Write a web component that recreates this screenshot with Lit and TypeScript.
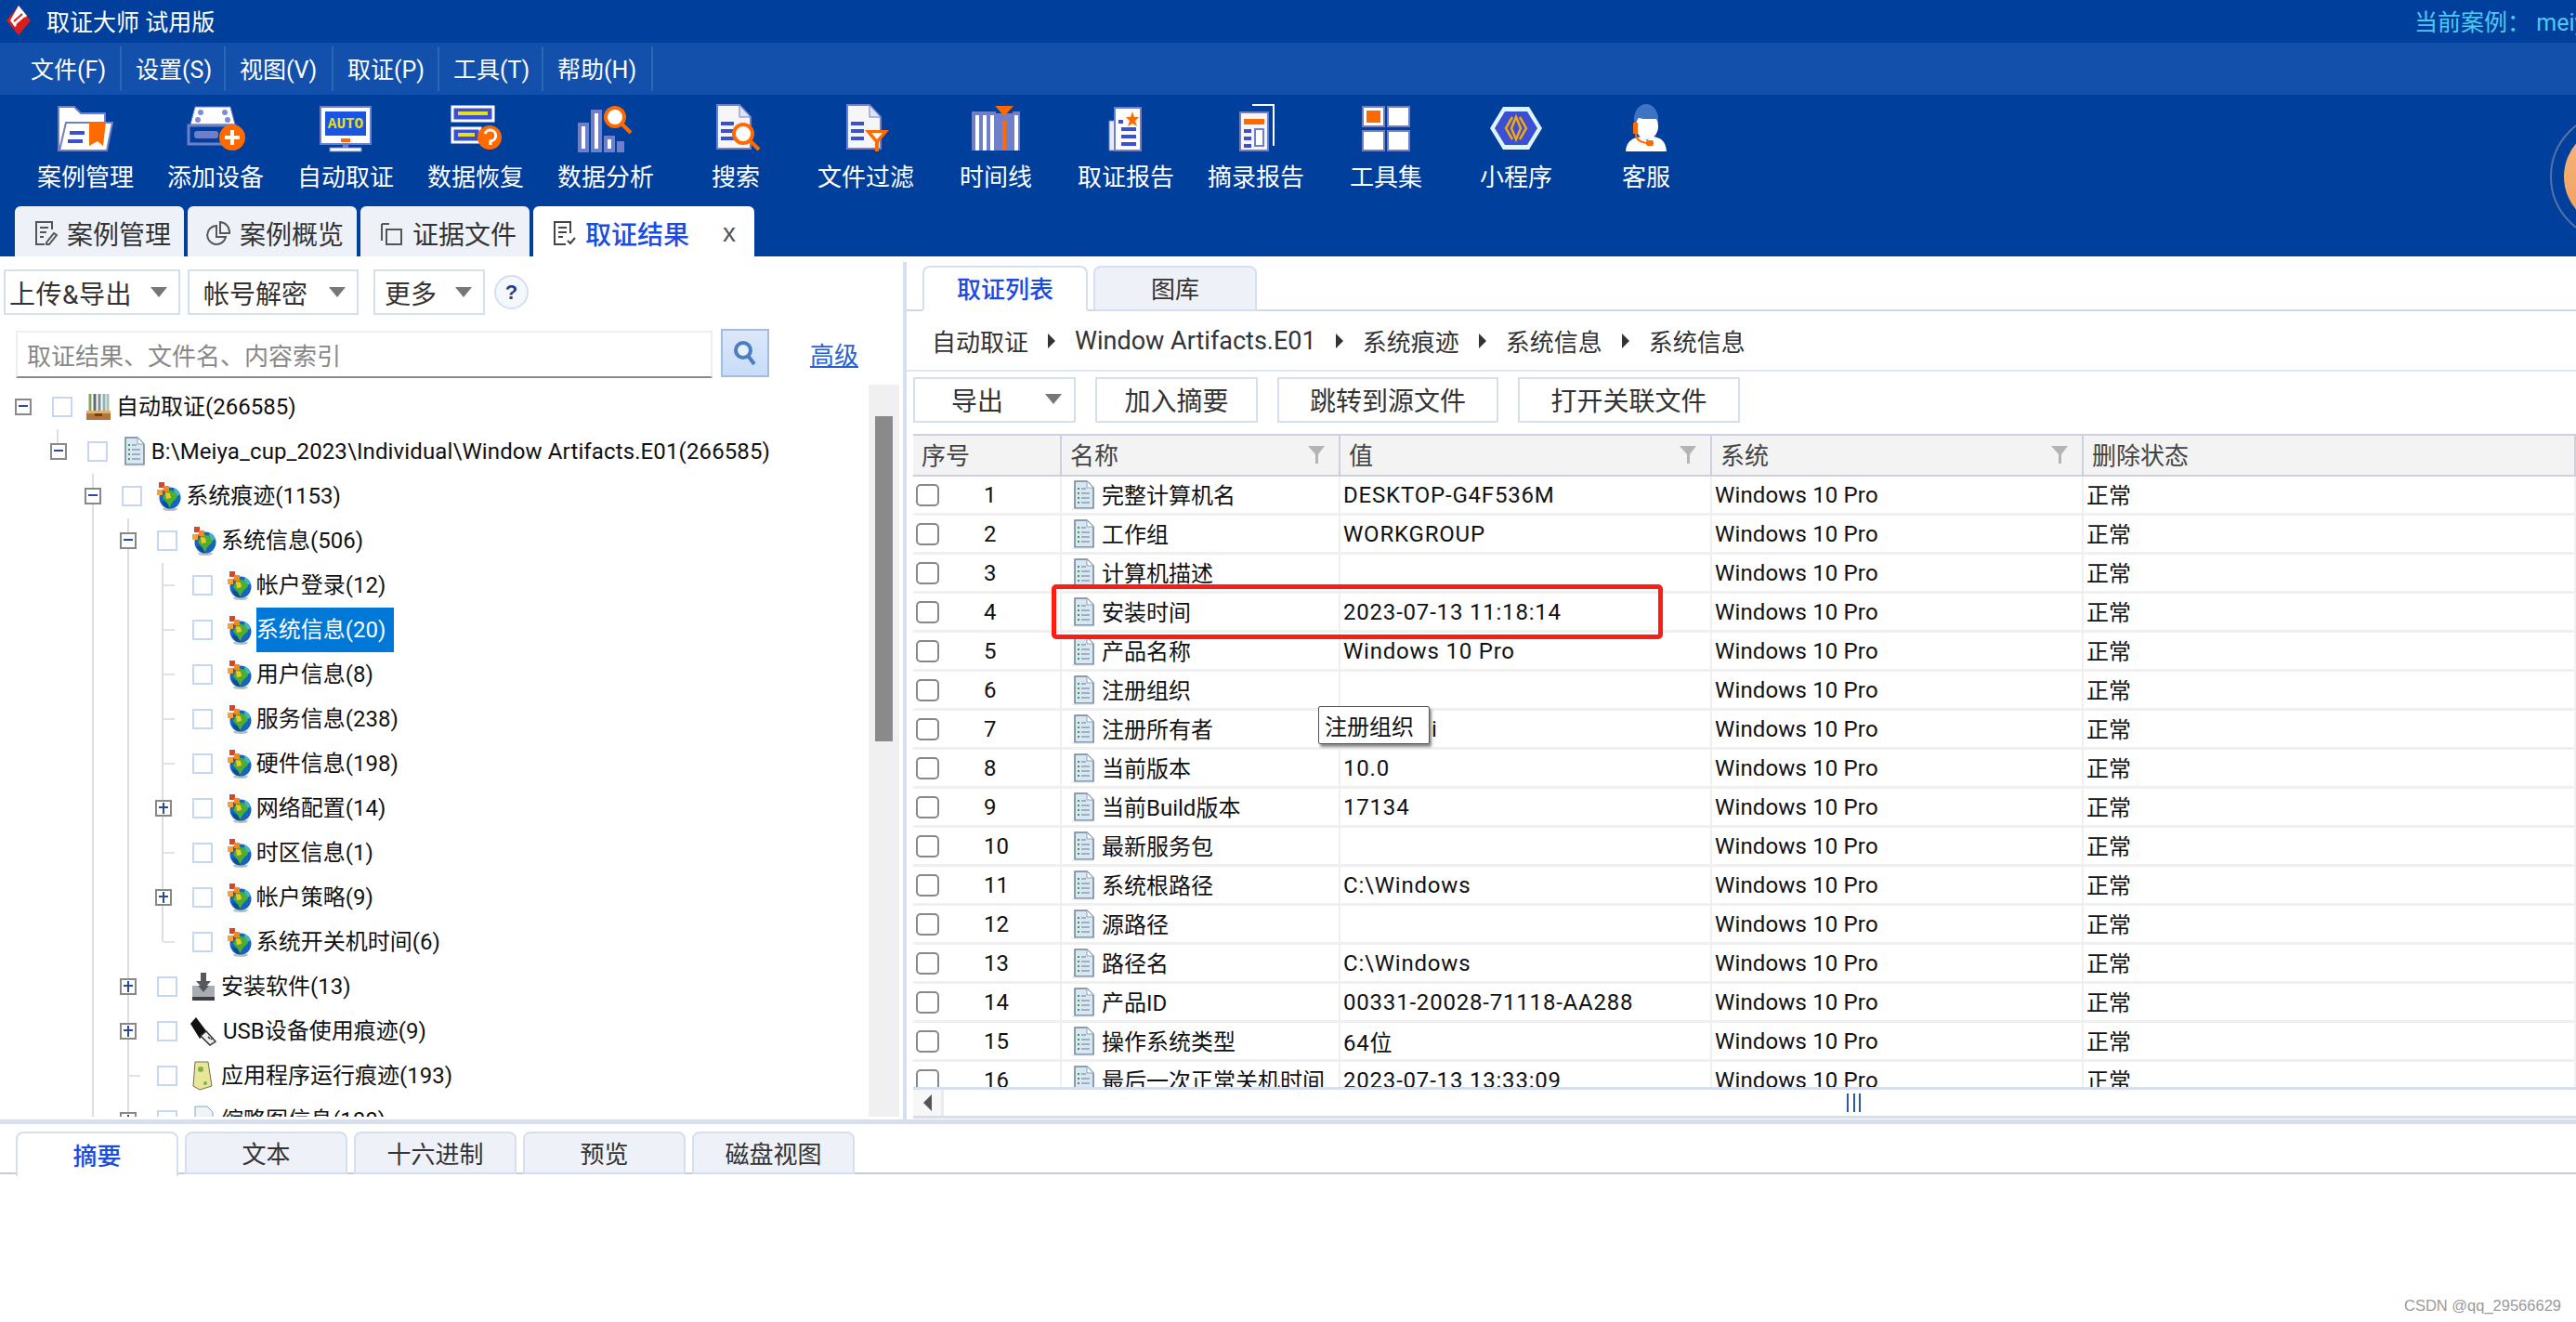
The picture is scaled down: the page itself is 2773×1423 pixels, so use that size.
import { LitElement, html, svg, css } from "lit";
import { customElement } from "lit/decorators.js";
import { classMap } from "lit/directives/class-map.js";

const O = "#6f7fc9";
const B = "#3a4fd2";
const R = "#ff6a00";

const icon = (shapes: unknown) => html`<svg width="64" height="52" viewBox="0 0 64 52">${shapes}</svg>`;

const lens = (x: number, y: number, r: number) => svg`
  <line x1=${x + r * 0.7} y1=${y + r * 0.7} x2=${x + r + 7} y2=${y + r + 7} stroke=${R} stroke-width="4"/>
  <circle cx=${x} cy=${y} r=${r} fill="#fff" stroke=${R} stroke-width="4"/>`;

const sheet = svg`
  <path d="M12 1h24l12 13v34H12z" fill="#f6f6f8" stroke=${O} stroke-width="2"/>
  <path d="M36 1v13h12z" fill="#dfe3f4" stroke=${O} stroke-width="1"/>
  <rect x="16" y="19" width="14" height="4" fill=${B}/>
  <rect x="16" y="27" width="14" height="4" fill=${B}/>
  <rect x="16" y="35" width="14" height="4" fill=${B}/>`;

const toolIcons: Record<string, unknown> = {
  case: icon(svg`
    <path d="M3 3h17l7 7h26v40H3z" fill="#fff" stroke=${O} stroke-width="2"/>
    <path d="M11 20h50l-6 30H4z" fill="#fff" stroke=${O} stroke-width="2"/>
    <rect x="15" y="29" width="16" height="4" fill=${B}/><rect x="13" y="38" width="16" height="4" fill=${B}/>
    <path d="M36 19h18l-3 26-6-5-9 5z" fill=${R}/>`),
  add: icon(svg`
    <path d="M10 3h38l5 19H5z" fill="#fff" stroke=${O} stroke-width="1"/>
    <g fill="#7f8cd0"><circle cx="16" cy="9" r="3"/><circle cx="42" cy="9" r="3"/><circle cx="13" cy="17" r="3"/><circle cx="45" cy="17" r="3"/></g>
    <rect x="3" y="23" width="50" height="20" fill="none" stroke=${O} stroke-width="3"/>
    <rect x="9" y="29" width="26" height="8" rx="3" fill=${O}/>
    <circle cx="50" cy="36" r="14" fill=${R}/>
    <path d="M50 28v16M42 36h16" stroke="#fff" stroke-width="4"/>`),
  auto: icon(svg`
    <rect x="5" y="3" width="54" height="40" fill="#fff" stroke=${O} stroke-width="2"/>
    <rect x="10" y="8" width="44" height="26" fill="#1a55e2"/>
    <text x="32" y="26" text-anchor="middle" font-family="Liberation Mono, monospace" font-size="16" font-weight="700" fill="#e6e01e">AUTO</text>
    <rect x="27" y="37" width="10" height="4" fill=${R}/>
    <rect x="29" y="43" width="6" height="4" fill=${O}/>
    <rect x="15" y="47" width="34" height="4" fill="#fff" stroke=${O} stroke-width="1"/>`),
  recover: icon(svg`
    <rect x="7" y="3" width="44" height="15" fill=${B} stroke="#fff" stroke-width="3"/>
    <rect x="13" y="8" width="32" height="4" fill="#e6e01e"/>
    <rect x="7" y="26" width="30" height="15" fill=${B} stroke="#fff" stroke-width="3"/>
    <rect x="13" y="31" width="18" height="4" fill="#e6e01e"/>
    <circle cx="47" cy="36" r="13" fill=${R}/>
    <path d="M42 32a6 6 0 1 1 6 8v4" fill="none" stroke="#fff" stroke-width="3"/>`),
  analysis: icon(svg`
    <g fill="#fff" stroke=${O} stroke-width="4">
      <rect x="4" y="22" width="8" height="28"/><rect x="18" y="8" width="8" height="42"/>
      <rect x="32" y="36" width="8" height="14"/><rect x="46" y="42" width="4" height="8"/>
    </g>${lens(42, 14, 10)}`),
  search: icon(svg`${sheet}${lens(40, 32, 10)}`),
  filter: icon(svg`${sheet}
    <path d="M31 28h26l-11 13v10h-4V41z" fill=${R}/>
    <path d="M38 31h12l-6 7z" fill="#fff"/>`),
  timeline: icon(svg`
    <rect x="6" y="8" width="26" height="42" fill=${O}/>
    <rect x="38" y="12" width="6" height="38" fill=${O}/><rect x="50" y="8" width="8" height="42" fill=${O}/>
    <g fill="#fff"><rect x="10" y="12" width="4" height="38"/><rect x="18" y="12" width="4" height="38"/><rect x="26" y="12" width="4" height="38"/><rect x="52" y="12" width="4" height="38"/></g>
    <rect x="32" y="10" width="18" height="40" fill=${O}/>
    <rect x="39" y="18" width="4" height="32" fill=${R}/>
    <path d="M31 2h20l-10 11z" fill=${R}/>`),
  report: icon(svg`
    <path d="M14 18h8v32h-8z" fill="#e9ecf8" stroke=${O} stroke-width="1"/>
    <rect x="20" y="4" width="28" height="46" fill="#fff" stroke=${O} stroke-width="2"/>
    <path d="M39 8l2 6h5l-4 4 2 6-5-3-5 3 2-6-4-4h5z" fill=${R}/>
    <rect x="24" y="17" width="5" height="4" fill=${B}/>
    <rect x="27" y="25" width="16" height="4" fill=${B}/><rect x="27" y="33" width="16" height="4" fill=${B}/><rect x="27" y="41" width="16" height="4" fill=${B}/>`),
  abstract: icon(svg`
    <path d="M28 1h23v44" fill="none" stroke="#fff" stroke-width="2"/>
    <rect x="15" y="9" width="30" height="41" fill="#f6f6f8" stroke=${O} stroke-width="2"/>
    <rect x="19" y="16" width="22" height="6" fill=${R}/>
    <g fill=${B}><rect x="19" y="27" width="8" height="4"/><rect x="19" y="35" width="8" height="4"/><rect x="19" y="43" width="8" height="4"/></g>
    <rect x="31" y="27" width="9" height="18" fill="#fff" stroke=${O} stroke-width="2"/>`),
  tools: icon(svg`
    <g fill="#fff" stroke=${O} stroke-width="2">
      <rect x="7" y="3" width="23" height="21"/><rect x="34" y="3" width="23" height="21"/>
      <rect x="7" y="29" width="23" height="21"/><rect x="34" y="29" width="23" height="21"/>
    </g><rect x="11" y="7" width="15" height="13" fill=${R}/>`),
  mini: icon(svg`
    <path d="M18 3h28l14 23-14 23H18L4 26z" fill="#dff4fb"/>
    <path d="M20 8h24l11 18-11 18H20L9 26z" fill=${B}/>
    <path d="M28 14l-7 12 7 12M36 14l7 12-7 12M32 14l-5 12 5 12 5-12z" fill="none" stroke="#f3a712" stroke-width="2.5"/>`),
  service: icon(svg`
    <ellipse cx="32" cy="16" rx="13" ry="16" fill="#3f74c4"/>
    <ellipse cx="33" cy="24" rx="12" ry="14" fill="#fff"/>
    <path d="M20 14a13 15 0 0 1 25 2h-16z" fill="#3f74c4"/>
    <rect x="18" y="20" width="5" height="12" fill=${R}/>
    <path d="M10 51c1-12 8-15 18-16l5 4 6-4c9 1 14 5 15 16z" fill="#fff"/>
    <path d="M21 32c0 6 4 9 12 10" fill="none" stroke=${R} stroke-width="2"/>
    <rect x="32" y="39" width="8" height="6" rx="2" fill=${R}/>`),
};

const tools: [string, string][] = [
  ["案例管理", "case"], ["添加设备", "add"], ["自动取证", "auto"], ["数据恢复", "recover"], ["数据分析", "analysis"],
  ["搜索", "search"], ["文件过滤", "filter"], ["时间线", "timeline"], ["取证报告", "report"], ["摘录报告", "abstract"],
  ["工具集", "tools"], ["小程序", "mini"], ["客服", "service"],
];

const docIcon = html`<svg width="28" height="32" viewBox="0 0 28 32">
  <path d="M5 1h13l7 7v22H5z" fill="#d9e7f3" stroke="#6d8296" stroke-width="1.5"/>
  <path d="M18 1v7h7z" fill="#fff" stroke="#8fa1b2"/>
  <path d="M8 9h2M8 14h2M8 19h2M8 24h2" stroke="#3d9a4a" stroke-width="2"/>
  <path d="M12 9h5M12 14h9M12 19h9M12 24h9" stroke="#9fb0c0" stroke-width="2"/>
  <path d="M2 31h23" stroke="#d8dde2"/>
</svg>`;

const treeIcons: Record<string, unknown> = {
  box: html`<svg width="28" height="32" viewBox="0 0 28 32">
    <g stroke-width="3"><path d="M5 2v18" stroke="#8aa35a"/><path d="M10 2v18" stroke="#5c6a70"/><path d="M15 2v18" stroke="#7c8e96"/><path d="M20 2v18" stroke="#93b0b4"/><path d="M24 2v18" stroke="#a9c3b0"/></g>
    <path d="M1 20h26v10H1z" fill="#b5743a"/><path d="M1 20h26v3H1z" fill="#e0b070"/><rect x="10" y="23" width="8" height="3" fill="#6e3f18"/>
  </svg>`,
  doc: docIcon,
  globe: html`<svg width="28" height="32" viewBox="0 0 28 32">
    <ellipse cx="16" cy="30" rx="8" ry="2" fill="#b9c0c8"/>
    <circle cx="16" cy="18" r="11.5" fill="#1565c0"/>
    <path d="M20 7.5a11.5 11.5 0 0 1 7 7l-6 2z" fill="#39b6d8"/>
    <path d="M12 9l9 2 3 6-6 6-3 6-3-7-4-4z" fill="#4caf2e"/>
    <path d="M11 12l5 1 1 5-5 1z" fill="#f5c526"/>
    <path d="M7 21a11 11 0 0 0 9 8.500l-3-6z" fill="#0c4a94"/>
    <path d="M4 1h6v6H4z" fill="#d8452a"/><path d="M9 5h6v6H9z" fill="#f08a24"/><path d="M2 9h6v6H2z" fill="#f2a23a"/>
  </svg>`,
  install: html`<svg width="28" height="32" viewBox="0 0 28 32">
    <path d="M11 1h6v9h5l-8 9-8-9h5z" fill="#55595e"/><rect x="2" y="15" width="24" height="16" fill="#a9adb2"/>
    <path d="M8 15l6 7 6-7z" fill="#55595e"/><rect x="2" y="27" width="24" height="4" fill="#3c3f43"/>
  </svg>`,
  usb: html`<svg width="30" height="32" viewBox="0 0 30 32">
    <path d="M6 1l12 16-8 7L0 8z" fill="#111"/><path d="M17 16l10 11-6 4-10-10z" fill="#eee" stroke="#333" stroke-width="1.5"/>
    <path d="M19 22l2 2M22 25l2-2" stroke="#333" stroke-width="1.5"/>
  </svg>`,
  app: html`<svg width="28" height="32" viewBox="0 0 28 32">
    <path d="M5 1h14l4 26-13 4-7-4z" fill="#e9e59a" stroke="#70704a"/><circle cx="11" cy="9" r="3" fill="#7fb24a"/><circle cx="16" cy="24" r="2" fill="#7fb24a"/>
  </svg>`,
  thumb: html`<svg width="28" height="32" viewBox="0 0 28 32">
    <path d="M5 1h13l6 6v23H5z" fill="#eef4fa" stroke="#8aa"/><circle cx="12" cy="20" r="6" fill="#49a44a"/>
  </svg>`,
};

interface TreeRow {
  level: number;
  label: string;
  icon: string;
  exp?: "minus" | "plus";
  lines?: number[];
  last?: boolean;
}

const L4 = [2, 3, 4];
const L3 = [2, 3];
const treeRows: TreeRow[] = [
  { level: 0, label: "自动取证(266585)", icon: "box", exp: "minus" },
  { level: 1, label: "B:\\Meiya_cup_2023\\Individual\\Window Artifacts.E01(266585)", icon: "doc", exp: "minus", last: true },
  { level: 2, label: "系统痕迹(1153)", icon: "globe", exp: "minus", lines: [2] },
  { level: 3, label: "系统信息(506)", icon: "globe", exp: "minus", lines: L3 },
  { level: 4, label: "帐户登录(12)", icon: "globe", lines: L4 },
  { level: 4, label: "系统信息(20)", icon: "globe", lines: L4 },
  { level: 4, label: "用户信息(8)", icon: "globe", lines: L4 },
  { level: 4, label: "服务信息(238)", icon: "globe", lines: L4 },
  { level: 4, label: "硬件信息(198)", icon: "globe", lines: L4 },
  { level: 4, label: "网络配置(14)", icon: "globe", exp: "plus", lines: L4 },
  { level: 4, label: "时区信息(1)", icon: "globe", lines: L4 },
  { level: 4, label: "帐户策略(9)", icon: "globe", exp: "plus", lines: L4 },
  { level: 4, label: "系统开关机时间(6)", icon: "globe", lines: [2, 3], last: true },
  { level: 3, label: "安装软件(13)", icon: "install", exp: "plus", lines: L3 },
  { level: 3, label: "USB设备使用痕迹(9)", icon: "usb", exp: "plus", lines: L3 },
  { level: 3, label: "应用程序运行痕迹(193)", icon: "app", lines: L3 },
  { level: 3, label: "缩略图信息(100)", icon: "thumb", exp: "plus", lines: L3 },
];

const tableRows: [string, string][] = [
  ["完整计算机名", "DESKTOP-G4F536M"], ["工作组", "WORKGROUP"], ["计算机描述", ""], ["安装时间", "2023-07-13 11:18:14"],
  ["产品名称", "Windows 10 Pro"], ["注册组织", ""], ["注册所有者", "i"], ["当前版本", "10.0"], ["当前Build版本", "17134"],
  ["最新服务包", ""], ["系统根路径", "C:\\Windows"], ["源路径", ""], ["路径名", "C:\\Windows"], ["产品ID", "00331-20028-71118-AA288"],
  ["操作系统类型", "64位"], ["最后一次正常关机时间", "2023-07-13 13:33:09"],
];

const funnel = html`<svg class="funnel" width="18" height="19" viewBox="0 0 18 19"><path d="M0 0h18l-7 9v10H8V9z" fill="#b4b4b4"/></svg>`;

@customElement("app-root")
export class AppRoot extends LitElement {
  static styles = css`
    :host {
      display: block;
      font-family: Roboto, "Noto Sans CJK SC", sans-serif;
      font-size: 24px;
      color: #111;
    }
    .app { position: relative; height: 1423px; overflow: hidden; background: #fff; }
    .title { display: flex; align-items: center; height: 46px; box-sizing: border-box; padding: 0 0 2px 7px; background: #00409c; color: #fff; font-size: 25px; }
    .title .name { margin-left: 17px; }
    .title .current { margin-left: auto; width: 174px; overflow: hidden; white-space: nowrap; color: #4fc8f6; }
    .menu { display: grid; grid-template-columns: 131px 112px 116px 114px 112px 118px; height: 56px; background: #1350ab; color: #fff; font-size: 25px; }
    .menu div { display: flex; align-items: center; margin: 4px 0; padding: 0 0 2px 15px; border-right: 2px solid #2c66b8; }
    .menu div:first-child { padding-left: 33px; }
    .toolbar { display: flex; height: 120px; padding: 10px 0 0 22px; box-sizing: border-box; background: #00409c; color: #fff; font-size: 26px; }
    .tool { display: flex; flex-direction: column; align-items: center; width: 140px; line-height: 34px; }
    .tool svg { margin-bottom: 10px; }
    .tabs { display: flex; gap: 4px; height: 54px; padding-left: 16px; background: #00409c; align-items: flex-end; }
    .tab { display: flex; align-items: center; width: 182px; height: 54px; box-sizing: border-box; padding: 3px 0 0 20px; gap: 10px; background: #eef2f8; border-radius: 6px 6px 0 0; font-size: 28px; color: #333; }
    .tab.on { width: 238px; background: #fff; color: #1a4be2; font-weight: 500; }
    .tab .close { margin-left: 26px; font: 28px "Liberation Sans", sans-serif; color: #555; }
    .main { display: flex; height: 929px; }
    .left { width: 972px; padding-top: 14px; box-sizing: border-box; display: flex; flex-direction: column; }
    .split { width: 4px; margin-top: 6px; background: #d5dff0; }
    .right { position: relative; flex: 1; min-width: 0; display: flex; flex-direction: column; }
    .btns { display: flex; align-items: center; height: 49px; padding-left: 4px; font-size: 28px; }
    .btn { display: flex; align-items: center; height: 49px; box-sizing: border-box; border: 2px solid #d5dff0; color: #333; }
    .arrow { width: 0; height: 0; border: 9px solid transparent; border-top: 11px solid #777; border-bottom: 0; }
    .up { width: 190px; padding: 0 12px 0 4px; justify-content: space-between; letter-spacing: 0.5px; }
    .key { width: 184px; margin-left: 8px; padding: 0 12px 0 15px; justify-content: space-between; }
    .more { width: 120px; margin-left: 16px; padding: 0 12px 0 10px; justify-content: space-between; }
    .help { display: flex; align-items: center; justify-content: center; width: 37px; height: 37px; margin-left: 10px; box-sizing: border-box; border: 2px solid #d5dff0; border-radius: 50%; background: #f4f7fc; font: 700 22px "Liberation Sans", sans-serif; color: #1c3f94; }
    .search { display: flex; align-items: flex-start; height: 53px; margin-top: 15px; padding-left: 17px; }
    .input { width: 750px; height: 51px; margin-top: 2px; box-sizing: border-box; display: flex; align-items: center; padding-left: 10px; border: 2px solid #eee; border-bottom-color: #8a8a8a; font-size: 26px; color: #888; }
    .go { display: flex; align-items: center; justify-content: center; width: 52px; height: 52px; margin-left: 9px; box-sizing: border-box; border: 2px solid #a3bce2; background: linear-gradient(#dce8fb, #c8dcf8); }
    .adv { margin: 8px 0 0 44px; font-size: 26px; color: #2a5fd0; text-decoration: underline; }
    .treewrap { display: flex; flex: 1; min-height: 0; margin: 7px 4px 3px 0; }
    .tree { flex: 1; min-width: 0; overflow: hidden; }
    .row { display: flex; align-items: center; height: 48px; white-space: nowrap; }
    .cell { flex: none; width: 37.7px; height: 48px; display: flex; align-items: center; }
    .cell.line { background: linear-gradient(#dedede, #dedede) no-repeat 23.5px 0 / 2px 100%; }
    .cell.half { background: linear-gradient(#dedede, #dedede) no-repeat 23.5px 0 / 2px 50%; }
    .stub { width: 16px; height: 2px; margin-left: 25px; background: #e2e2e2; }
    .exp { position: relative; width: 18px; height: 18px; margin-left: 16px; box-sizing: border-box; border: 2px solid #888; background: #fff; }
    .exp::before { content: ""; position: absolute; left: 2px; right: 2px; top: 5px; height: 2px; background: #2c4a9a; }
    .exp.plus::after { content: ""; position: absolute; left: 6px; top: 1px; bottom: 1px; width: 2px; background: #2c4a9a; }
    .cb { flex: none; width: 22px; height: 22px; margin-left: 18.3px; box-sizing: border-box; border: 2px solid #c6d6f7; }
    .row svg { flex: none; margin-left: 14px; }
    .row .txt { height: 48px; line-height: 48px; margin-left: 5px; padding-right: 9px; }
    .row .txt.long { letter-spacing: 0.12px; }
    .row .txt.sel { background: #0078d7; color: #fff; }
    .track { flex: none; width: 33px; background: #f0f0f0; padding-top: 34px; box-sizing: border-box; }
    .thumb { height: 350px; margin: 0 7px; background: #8a8a8a; }
    .rtabs { display: flex; gap: 6px; height: 47px; margin-top: 10px; padding-left: 17px; border-bottom: 2px solid #cfd8ea; font-size: 26px; color: #333; }
    .rtab { display: flex; align-items: center; justify-content: center; width: 176px; height: 49px; box-sizing: border-box; padding-bottom: 2px; border: 2px solid #d5dff0; border-radius: 8px 8px 0 0; background: #eef2f8; }
    .rtab.on { width: 178px; background: #fff; border-bottom-color: #fff; color: #1a4be2; font-weight: 500; }
    .crumbs { display: flex; align-items: center; gap: 21px; height: 63px; padding-left: 27px; border-bottom: 2px solid #dfe6f2; font-size: 26px; color: #333; }
    .crumbs .latin { font-size: 27px; }
    .tri { width: 0; height: 0; border: 8px solid transparent; border-left: 8px solid #333; border-right: 0; }
    .acts { display: flex; gap: 21px; padding: 6px 0 12px 7px; font-size: 28px; }
    .acts .btn { justify-content: center; padding-bottom: 2px; }
    .acts .btn:nth-child(1) { width: 175px; padding: 0 13px 2px 39px; justify-content: space-between; }
    .acts .btn:nth-child(2) { width: 175px; }
    .acts .btn:nth-child(3) { width: 238px; }
    .acts .btn:nth-child(4) { width: 239px; }
    .grid { margin-left: 7px; }
    .hd, .tr { display: grid; grid-template-columns: 160px 300px 400px 400px 1fr; }
    .hd { height: 46px; box-sizing: border-box; border-top: 2px solid #cdd0e0; border-bottom: 2px solid #cdd0e0; background: #f3f3f3; font-size: 26px; color: #444; }
    .hd div { position: relative; display: flex; align-items: center; padding: 0 0 4px 9px; border-right: 2px solid #cdd0e0; }
    .funnel { position: absolute; top: 11px; right: 15px; }
    .body { height: 657px; overflow: hidden; }
    .tr { height: 42px; box-sizing: border-box; border-bottom: 3px solid #f0f0f0; }
    .tr > div { display: flex; align-items: center; white-space: nowrap; overflow: hidden; border-right: 2px solid #f0f0f0; padding-left: 3px; }
    .box { flex: none; width: 25px; height: 24px; box-sizing: border-box; border: 2px solid #888; border-radius: 5px; }
    .num { margin-left: 48px; }
    .tr svg { margin-left: 6px; }
    .tr .nm { margin: 0 0 2px 6px; }
    .tr .cjk { margin-bottom: 2px; }
    .tr .val { letter-spacing: 0.8px; }
    .tr .sys { letter-spacing: 0.15px; }
    .behind { padding-left: 95px; }
    .hbar { display: flex; height: 34px; margin-left: 7px; box-sizing: border-box; border-top: 3px solid #d5dff0; border-bottom: 3px solid #d5dff0; align-items: center; }
    .hleft { display: flex; align-items: center; justify-content: center; width: 33px; height: 100%; background: #f7f7f7; border-right: 3px solid #e6ecf6; box-sizing: border-box; }
    .hleft i { width: 0; height: 0; border: 9px solid transparent; border-right: 9px solid #555; border-left: 0; }
    .grip { margin-left: 972px; width: 15px; height: 20px; border-left: 2px solid #2c5aa0; border-right: 2px solid #2c5aa0; box-sizing: border-box; background: linear-gradient(#2c5aa0, #2c5aa0) no-repeat center / 2px 100%; }
    .band { height: 5px; background: #d5dff0; }
    .btabs { display: flex; gap: 7px; height: 54px; box-sizing: border-box; padding: 8px 0 0 17px; border-bottom: 2px solid #c8cadb; font-size: 26px; color: #333; }
    .btab { display: flex; align-items: center; justify-content: center; width: 175px; height: 46px; box-sizing: border-box; padding-bottom: 2px; border: 2px solid #d5dff0; border-radius: 8px 8px 0 0; background: #eef2f8; }
    .btab.on { background: #fff; color: #1a4be2; font-weight: 500; height: 48px; border-bottom: 0; }
    .red { position: absolute; left: 156px; top: 353px; width: 658px; height: 59px; box-sizing: border-box; border: 5px solid #ff1c12; border-radius: 5px; }
    .tip { position: absolute; left: 443px; top: 484px; width: 120px; height: 41px; box-sizing: border-box; padding-left: 6px; display: flex; align-items: center; background: #fff; border: 1px solid #555; border-radius: 2px; box-shadow: 2px 3px 3px #888; }
    .ring { position: absolute; left: 2745px; top: 120px; width: 140px; height: 140px; box-sizing: border-box; border: 2px solid #5a70a8; border-radius: 50%; display: flex; align-items: center; justify-content: center; }
    .ring div { width: 110px; height: 110px; border-radius: 50%; background: linear-gradient(#f8b47a, #f2a060); }
    .mark { position: absolute; right: 16px; bottom: 8px; font: 16.5px "Liberation Sans", sans-serif; color: #9a9a9a; }
  `;

  renderTree(r: TreeRow, i: number) {
    const cells = [];
    for (let c = 0; c < r.level; c++) {
      cells.push(html`<div class="cell ${(r.lines || []).includes(c) ? "line" : ""}"></div>`);
    }
    const own = classMap({
      cell: true,
      line: !!r.lines && r.lines.includes(r.level),
      half: !!r.last,
    });
    return html`<div class="row">
      ${cells}
      <div class=${own}>
        ${r.exp
          ? html`<div class=${classMap({ exp: true, plus: r.exp === "plus" })}></div>`
          : html`<div class="stub"></div>`}
      </div>
      <div class="cb"></div>
      ${treeIcons[r.icon]}
      <div class=${classMap({ txt: true, sel: i === 5, long: r.level === 1 })}>${r.label}</div>
    </div>`;
  }

  render() {
    return html`<div class="app">
      <div class="title">
        <svg width="26" height="32" viewBox="0 0 26 32">
          <path d="M13 0l13 16-13 16L0 16z" fill="#d81e1e"/>
          <path d="M13 0l9 11-13 12-5-7z" fill="#fff"/>
          <path d="M8 17l9-8M11 21l9-8" stroke="#d81e1e" stroke-width="2"/>
        </svg>
        <span class="name">取证大师 试用版</span>
        <span class="current">当前案例： meiya</span>
      </div>
      <div class="menu">
        ${["文件(F)", "设置(S)", "视图(V)", "取证(P)", "工具(T)", "帮助(H)"].map((m) => html`<div>${m}</div>`)}
      </div>
      <div class="toolbar">
        ${tools.map(([label, key]) => html`<div class="tool">${toolIcons[key]}<span>${label}</span></div>`)}
      </div>
      <div class="tabs">
        <div class="tab">
          <svg width="26" height="28" viewBox="0 0 26 28" fill="none" stroke="#555" stroke-width="2"><path d="M20 10V2H3v24h9M7 8h9M7 13h7M7 18h4M14 24l8-10 3 2-8 10h-3z"/></svg>
          案例管理
        </div>
        <div class="tab">
          <svg width="26" height="28" viewBox="0 0 26 28" fill="none" stroke="#555" stroke-width="2"><path d="M11 6a10 10 0 1 0 10 12H11zM15 2v12h10A11 11 0 0 0 15 2z"/></svg>
          案例概览
        </div>
        <div class="tab">
          <svg width="26" height="28" viewBox="0 0 26 28" fill="none" stroke="#555" stroke-width="2"><path d="M3 4h8M3 4v18M8 10h16v16H8z"/></svg>
          证据文件
        </div>
        <div class="tab on">
          <svg width="26" height="28" viewBox="0 0 26 28" fill="none" stroke="#444" stroke-width="2"><path d="M20 14V2H3v24h12M7 8h9M7 13h9M7 18h5M17 22l3 3 5-6"/></svg>
          取证结果
          <span class="close">x</span>
        </div>
      </div>
      <div class="main">
        <div class="left">
          <div class="btns">
            <div class="btn up">上传&导出<span class="arrow"></span></div>
            <div class="btn key">帐号解密<span class="arrow"></span></div>
            <div class="btn more">更多<span class="arrow"></span></div>
            <div class="help">?</div>
          </div>
          <div class="search">
            <div class="input">取证结果、文件名、内容索引</div>
            <div class="go">
              <svg width="28" height="30" viewBox="0 0 28 30" fill="none" stroke="#4a7ec0" stroke-width="4"><circle cx="12" cy="12" r="8" fill="#e6f0fc"/><path d="M18 19l6 8"/></svg>
            </div>
            <div class="adv">高级</div>
          </div>
          <div class="treewrap">
            <div class="tree">${treeRows.map((r, i) => this.renderTree(r, i))}</div>
            <div class="track"><div class="thumb"></div></div>
          </div>
        </div>
        <div class="split"></div>
        <div class="right">
          <div class="rtabs">
            <div class="rtab on">取证列表</div>
            <div class="rtab">图库</div>
          </div>
          <div class="crumbs">
            <span>自动取证</span><i class="tri"></i>
            <span class="latin">Window Artifacts.E01</span><i class="tri"></i>
            <span>系统痕迹</span><i class="tri"></i>
            <span>系统信息</span><i class="tri"></i>
            <span>系统信息</span>
          </div>
          <div class="acts">
            <div class="btn">导出<span class="arrow"></span></div>
            <div class="btn">加入摘要</div>
            <div class="btn">跳转到源文件</div>
            <div class="btn">打开关联文件</div>
          </div>
          <div class="grid">
            <div class="hd">
              <div>序号</div>
              <div>名称${funnel}</div>
              <div>值${funnel}</div>
              <div>系统${funnel}</div>
              <div>删除状态</div>
            </div>
            <div class="body">
              ${tableRows.map(([name, value], i) => html`<div class="tr">
                <div><span class="box"></span><span class="num">${i + 1}</span></div>
                <div>${docIcon}<span class="nm">${name}</span></div>
                <div><span class="val ${value === "i" ? "behind" : ""}">${value}</span></div>
                <div><span class="sys">Windows 10 Pro</span></div>
                <div><span class="cjk">正常</span></div>
              </div>`)}
            </div>
          </div>
          <div class="hbar">
            <div class="hleft"><i></i></div>
            <div class="grip"></div>
          </div>
          <div class="red"></div>
          <div class="tip">注册组织</div>
        </div>
      </div>
      <div class="band"></div>
      <div class="btabs">
        <div class="btab on">摘要</div>
        <div class="btab">文本</div>
        <div class="btab">十六进制</div>
        <div class="btab">预览</div>
        <div class="btab">磁盘视图</div>
      </div>
      <div class="ring"><div></div></div>
      <div class="mark">CSDN @qq_29566629</div>
    </div>`;
  }
}
